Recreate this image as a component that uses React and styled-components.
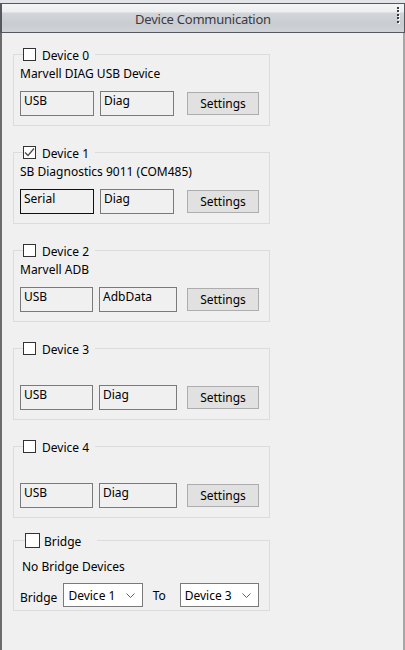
import React from 'react'
import styled, { createGlobalStyle } from 'styled-components'

const GlobalStyle = createGlobalStyle`
    html, body {
        margin: 0;
        padding: 0;
        background: #f0f0f0;
    }
    body {
        font-family: "Noto Sans", "Open Sans", sans-serif;
        font-size: 12px;
        color: #000;
    }
`

const Window = styled.div`
    height: 100vh;
    box-sizing: border-box;
    padding-top: 3px;
    background: #e3e4e7;
    display: flex;
    flex-direction: column;
`

const Header = styled.div`
    position: relative;
    height: 30px;
    box-sizing: border-box;
    border: 1px solid #55585e;
    border-left-width: 2px;
    background: linear-gradient(
        to bottom,
        #f4f5f7 0px,
        #eceef0 8px,
        #d2d5da 9px,
        #c9ccd1 20px,
        #d0d3d7 28px
    );
    display: flex;
    align-items: center;
    justify-content: center;
    padding-top: 2px;
    color: #3a3a42;
    font-size: 13px;
    letter-spacing: -0.25px;
`

const Grip = styled.div`
    position: absolute;
    right: 5px;
    top: 3px;
    display: flex;
    flex-direction: column;
    gap: 1.4px;
    & > span {
        width: 2px;
        height: 2px;
        background: #3b3b3b;
        box-shadow: 1px 1px 0 #fff;
    }
`

const Body = styled.div`
    flex: 1;
    background: #f0f0f0;
    border-left: 2px solid #6c6c6c;
    border-right: 2px solid #a6a6a6;
    padding: 14px 0 0 11px;
    display: flex;
    flex-direction: column;
`

const Group = styled.fieldset`
    width: 257px;
    box-sizing: border-box;
    margin: 0 0 ${p => p.$gap}px 0;
    padding: 0 10px ${p => p.$bottom}px 6px;
    border: 1px solid #dcdcdc;
    min-width: 0;
`

const Legend = styled.legend`
    display: flex;
    align-items: center;
    height: ${p => p.$h}px;
    padding: 0 ${p => p.$right}px 0 0;
    margin-left: ${p => p.$ml}px;
`

const Box = styled.span`
    width: ${p => p.$size}px;
    height: ${p => p.$size}px;
    box-sizing: border-box;
    border: 1px solid #333;
    background: #fff;
    display: inline-flex;
    align-items: center;
    justify-content: center;
`

const LegendText = styled.span`
    margin-left: ${p => p.$gap}px;
    padding-top: 3px;
    line-height: 14px;
`

const Desc = styled.div`
    height: 15px;
    line-height: 15px;
    margin-top: ${p => p.$top}px;
    padding-left: ${p => p.$indent}px;
    white-space: nowrap;
`

const Row = styled.div`
    display: flex;
    align-items: center;
    margin-top: ${p => p.$top}px;
`

const Field = styled.div`
    width: ${p => p.$w}px;
    height: 25px;
    box-sizing: border-box;
    border: 1px solid ${p => (p.$focus ? '#111' : '#7a7a7a')};
    margin-right: 6px;
    padding: 1px 0 0 3px;
    line-height: 15px;
`

const Button = styled.button`
    margin-left: auto;
    width: 72px;
    height: 23px;
    box-sizing: border-box;
    border: 1px solid #adadad;
    background: #e1e1e1;
    font-family: inherit;
    font-size: 12px;
    color: #000;
    padding: 0;
`

const Label = styled.span`
    margin: 0 ${p => p.$mr}px 0 ${p => p.$ml || 0}px;
    padding-top: ${p => p.$pt}px;
    line-height: 15px;
`

const Select = styled.div`
    width: 84px;
    height: 24px;
    box-sizing: border-box;
    border: 1px solid #7a7a7a;
    background: #fff;
    display: flex;
    align-items: center;
    justify-content: space-between;
    padding: 0 7px 0 4px;
    line-height: 15px;
`

const Check = () => (
    <svg width="11" height="11" viewBox="0 0 11 11">
        <polyline points="1,5.5 4,8.5 10,1.5" fill="none" stroke="#4a4a4a" strokeWidth="1.3" />
    </svg>
)

const Chevron = () => (
    <svg width="9" height="5" viewBox="0 0 9 5">
        <polyline points="0.5,0.5 4.5,4.5 8.5,0.5" fill="none" stroke="#606060" strokeWidth="1" />
    </svg>
)

const devices = [
    { id: 0, name: 'Marvell DIAG USB Device', iface: 'USB', mode: 'Diag', w1: 74, w2: 74 },
    { id: 1, checked: true, focus: true, name: 'SB Diagnostics 9011 (COM485)', iface: 'Serial', mode: 'Diag', w1: 74, w2: 74 },
    { id: 2, name: 'Marvell ADB', iface: 'USB', mode: 'AdbData', w1: 73, w2: 78 },
    { id: 3, name: '', iface: 'USB', mode: 'Diag', w1: 73, w2: 78 },
    { id: 4, name: '', iface: 'USB', mode: 'Diag', w1: 73, w2: 78 },
]

export default function App() {
    return (
        <>
            <GlobalStyle />
            <Window>
                <Header>
                    Device Communication
                    <Grip>
                        <span /><span /><span /><span /><span />
                    </Grip>
                </Header>
                <Body>
                    {devices.map(d => (
                        <Group key={d.id} $gap={d.id === 4 ? 15 : 19} $bottom={9}>
                            <Legend $h={14} $right={6} $ml={3}>
                                <Box $size={13}>{d.checked && <Check />}</Box>
                                <LegendText $gap={6}>Device {d.id}</LegendText>
                            </Legend>
                            <Desc $top={5} $indent={0}>{d.name}</Desc>
                            <Row $top={10}>
                                <Field $w={d.w1} $focus={d.focus}>{d.iface}</Field>
                                <Field $w={d.w2}>{d.mode}</Field>
                                <Button>Settings</Button>
                            </Row>
                        </Group>
                    ))}
                    <Group $gap={0} $bottom={3}>
                        <Legend $h={15} $right={16} $ml={5}>
                            <Box $size={15} />
                            <LegendText $gap={4}>Bridge</LegendText>
                        </Legend>
                        <Desc $top={11} $indent={2}>No Bridge Devices</Desc>
                        <Row $top={9}>
                            <Label $mr={6} $pt={4}>Bridge</Label>
                            <Select>Device 1<Chevron /></Select>
                            <Label $ml={10} $mr={14} $pt={0}>To</Label>
                            <Select>Device 3<Chevron /></Select>
                        </Row>
                    </Group>
                </Body>
            </Window>
        </>
    )
}
